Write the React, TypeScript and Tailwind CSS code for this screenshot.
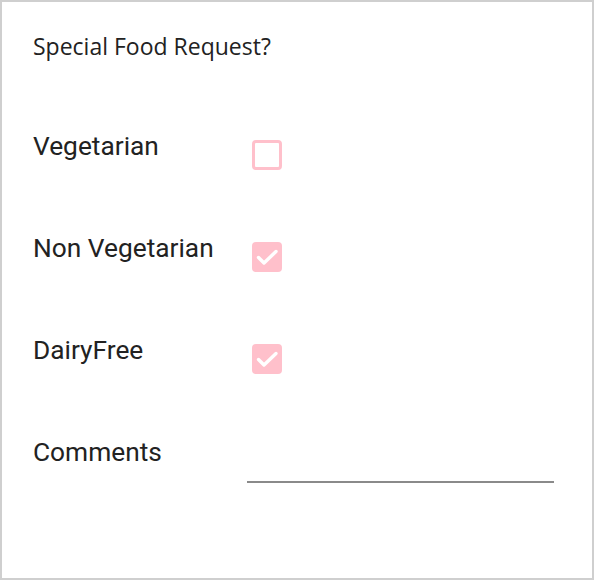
export default function App() {
  const items = [
    { label: "Vegetarian", checked: false },
    { label: "Non Vegetarian", checked: true },
    { label: "DairyFree", checked: true },
  ];

  return (
    <div className="h-[580px] w-[594px] border-2 border-[#cfcfcf] bg-white px-[31px] pt-[30px] text-[#222]">
      <h2 className="font-['Open_Sans',sans-serif] text-[23px] leading-[28px]">Special Food Request?</h2>

      <div className="mt-[68px] flex flex-col gap-[48px] font-['Roboto',sans-serif] text-[26.3px]">
        {items.map((item) => (
          <div key={item.label} className="flex h-[54px] items-start">
            <span className="w-[219px] leading-[36px]">{item.label}</span>
            <span
              className={
                item.checked
                  ? "mt-[12px] flex h-[30px] w-[30px] items-center justify-center rounded-[4px] bg-[#ffc0cb]"
                  : "mt-[12px] h-[30px] w-[30px] rounded-[4px] border-[3px] border-[#ffc0cb]"
              }
            >
              {item.checked && (
                <svg width="30" height="30" viewBox="0 0 30 30" fill="none" stroke="white" strokeWidth="3.4" strokeLinecap="round" strokeLinejoin="round">
                  <path d="M6.5 15.5l5.5 5.5L24 9.5" />
                </svg>
              )}
            </span>
          </div>
        ))}

        <div className="flex items-start">
          <span className="w-[214px] leading-[36px]">Comments</span>
          <div className="mt-[47px] h-[2px] w-[307px] bg-[#8a8a8a]" />
        </div>
      </div>
    </div>
  );
}
